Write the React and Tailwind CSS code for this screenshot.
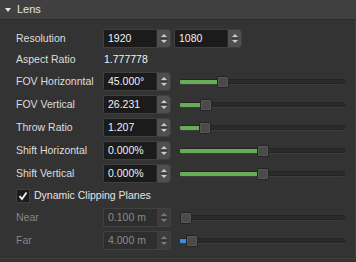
import React from 'react';

const font = { fontFamily: '"Liberation Sans", Arial, sans-serif' };

function Spin({ disabled }) {
  const c = disabled ? '#7a7a7a' : '#c9c9c9';
  return (
    <div className={`w-[14px] h-full flex flex-col items-center justify-center rounded-r-[2px] border-l ${disabled ? 'bg-[#3c3c3c] border-[#2e2e2e]' : 'bg-[#4f4f4f] border-[#2a2a2a]'}`}>
      <svg width="10" height="15" viewBox="0 0 10 15">
        <path d="M2 6 L5 3 L8 6 Z" fill={c} />
        <line x1="1" y1="7.5" x2="9" y2="7.5" stroke={disabled ? '#333' : '#3a3a3a'} strokeWidth="1" />
        <path d="M2 9 L5 12 L8 9 Z" fill={c} />
      </svg>
    </div>
  );
}

function NumInput({ value, disabled, className = '' }) {
  return (
    <div className={`flex h-[19px] w-[68px] rounded-[2px] border ${disabled ? 'border-[#424242] bg-[#2e2e2e]' : 'border-[#3f3f3f] bg-[#1b1b1b]'} ${className}`}>
      <div className={`flex-1 flex items-center pl-[4px] text-[10.5px] ${disabled ? 'text-[#8a8a8a]' : 'text-[#f2f2f2]'}`}>
        {value}
      </div>
      <Spin disabled={disabled} />
    </div>
  );
}

function Slider({ pos, fill = '#66ad58' }) {
  // pos = thumb left offset in px from track start
  return (
    <div className="relative flex-1 ml-[9px] h-[12px] flex items-center">
      <div className="w-full h-[5px] rounded-[2px] bg-[#2a2a2a] border border-[#242424] shadow-[0_1px_0_#3d3d3d]" />
      {pos > 0 && (
        <div className="absolute left-0 h-[4px] rounded-l-[1px]" style={{ width: pos + 1, background: fill }} />
      )}
      <div
        className="absolute top-0 w-[12px] h-[12px] rounded-[2px] bg-[#4a4a4a] border border-[#242424] shadow-[inset_0_0_0_1px_#585858]"
        style={{ left: pos }}
      />
    </div>
  );
}

function Row({ label, value, pos, disabled, fill }) {
  return (
    <div className="flex items-center h-[19px]">
      <div className={`w-[87px] text-[10.5px] ${disabled ? 'text-[#858585]' : 'text-[#dedede]'}`}>{label}</div>
      <NumInput value={value} disabled={disabled} />
      <Slider pos={pos} fill={fill} />
    </div>
  );
}

export default function App() {
  return (
    <div className="w-[356px] h-[262px] bg-[#333333] overflow-hidden" style={font}>
      <div className="h-[259px] border-r border-b border-[#3e3e3e]">
        <div className="h-[20px] bg-[#404040] border-b border-[#2b2b2b] flex items-center">
          <svg width="6" height="4" viewBox="0 0 6 4" className="ml-[5px]">
            <path d="M0 0 L6 0 L3 4 Z" fill="#e6e6e6" />
          </svg>
          <span className="ml-[6px] text-[11px] text-[#e4e4e4]">Lens</span>
        </div>

        <div className="pt-[9px] pl-[16px] pr-[10px] flex flex-col gap-[4px]">
          <div className="flex items-center h-[19px]">
            <div className="w-[87px] text-[10.5px] text-[#dedede]">Resolution</div>
            <NumInput value="1920" />
            <NumInput value="1080" className="ml-[3px]" />
          </div>

          <div className="flex items-center h-[16px]">
            <div className="w-[87px] text-[10.5px] text-[#dedede]">Aspect Ratio</div>
            <div className="pl-[1px] text-[10.5px] text-[#f2f2f2]">1.777778</div>
          </div>

          <Row label="FOV Horizonntal" value="45.000°" pos={37} />
          <Row label="FOV Vertical" value="26.231" pos={20} />
          <Row label="Throw Ratio" value="1.207" pos={19} />
          <Row label="Shift Horizontal" value="0.000%" pos={77} />
          <Row label="Shift Vertical" value="0.000%" pos={77} />

          <div className="flex items-center h-[17px]">
            <div className="w-[14px] h-[14px] bg-[#1c1c1c] border border-[#404040] rounded-[1px] flex items-center justify-center">
              <svg width="10" height="10" viewBox="0 0 10 10">
                <path d="M1.5 5.2 L4 8 L8.5 1.5" stroke="#f4f4f4" strokeWidth="1.8" fill="none" />
              </svg>
            </div>
            <span className="ml-[4px] text-[10.5px] text-[#e4e4e4]">Dynamic Clipping Planes</span>
          </div>

          <Row label="Near" value="0.100 m" pos={0} disabled />
          <Row label="Far" value="4.000 m" pos={6} disabled fill="#3d8fe0" />
        </div>
      </div>
    </div>
  );
}
